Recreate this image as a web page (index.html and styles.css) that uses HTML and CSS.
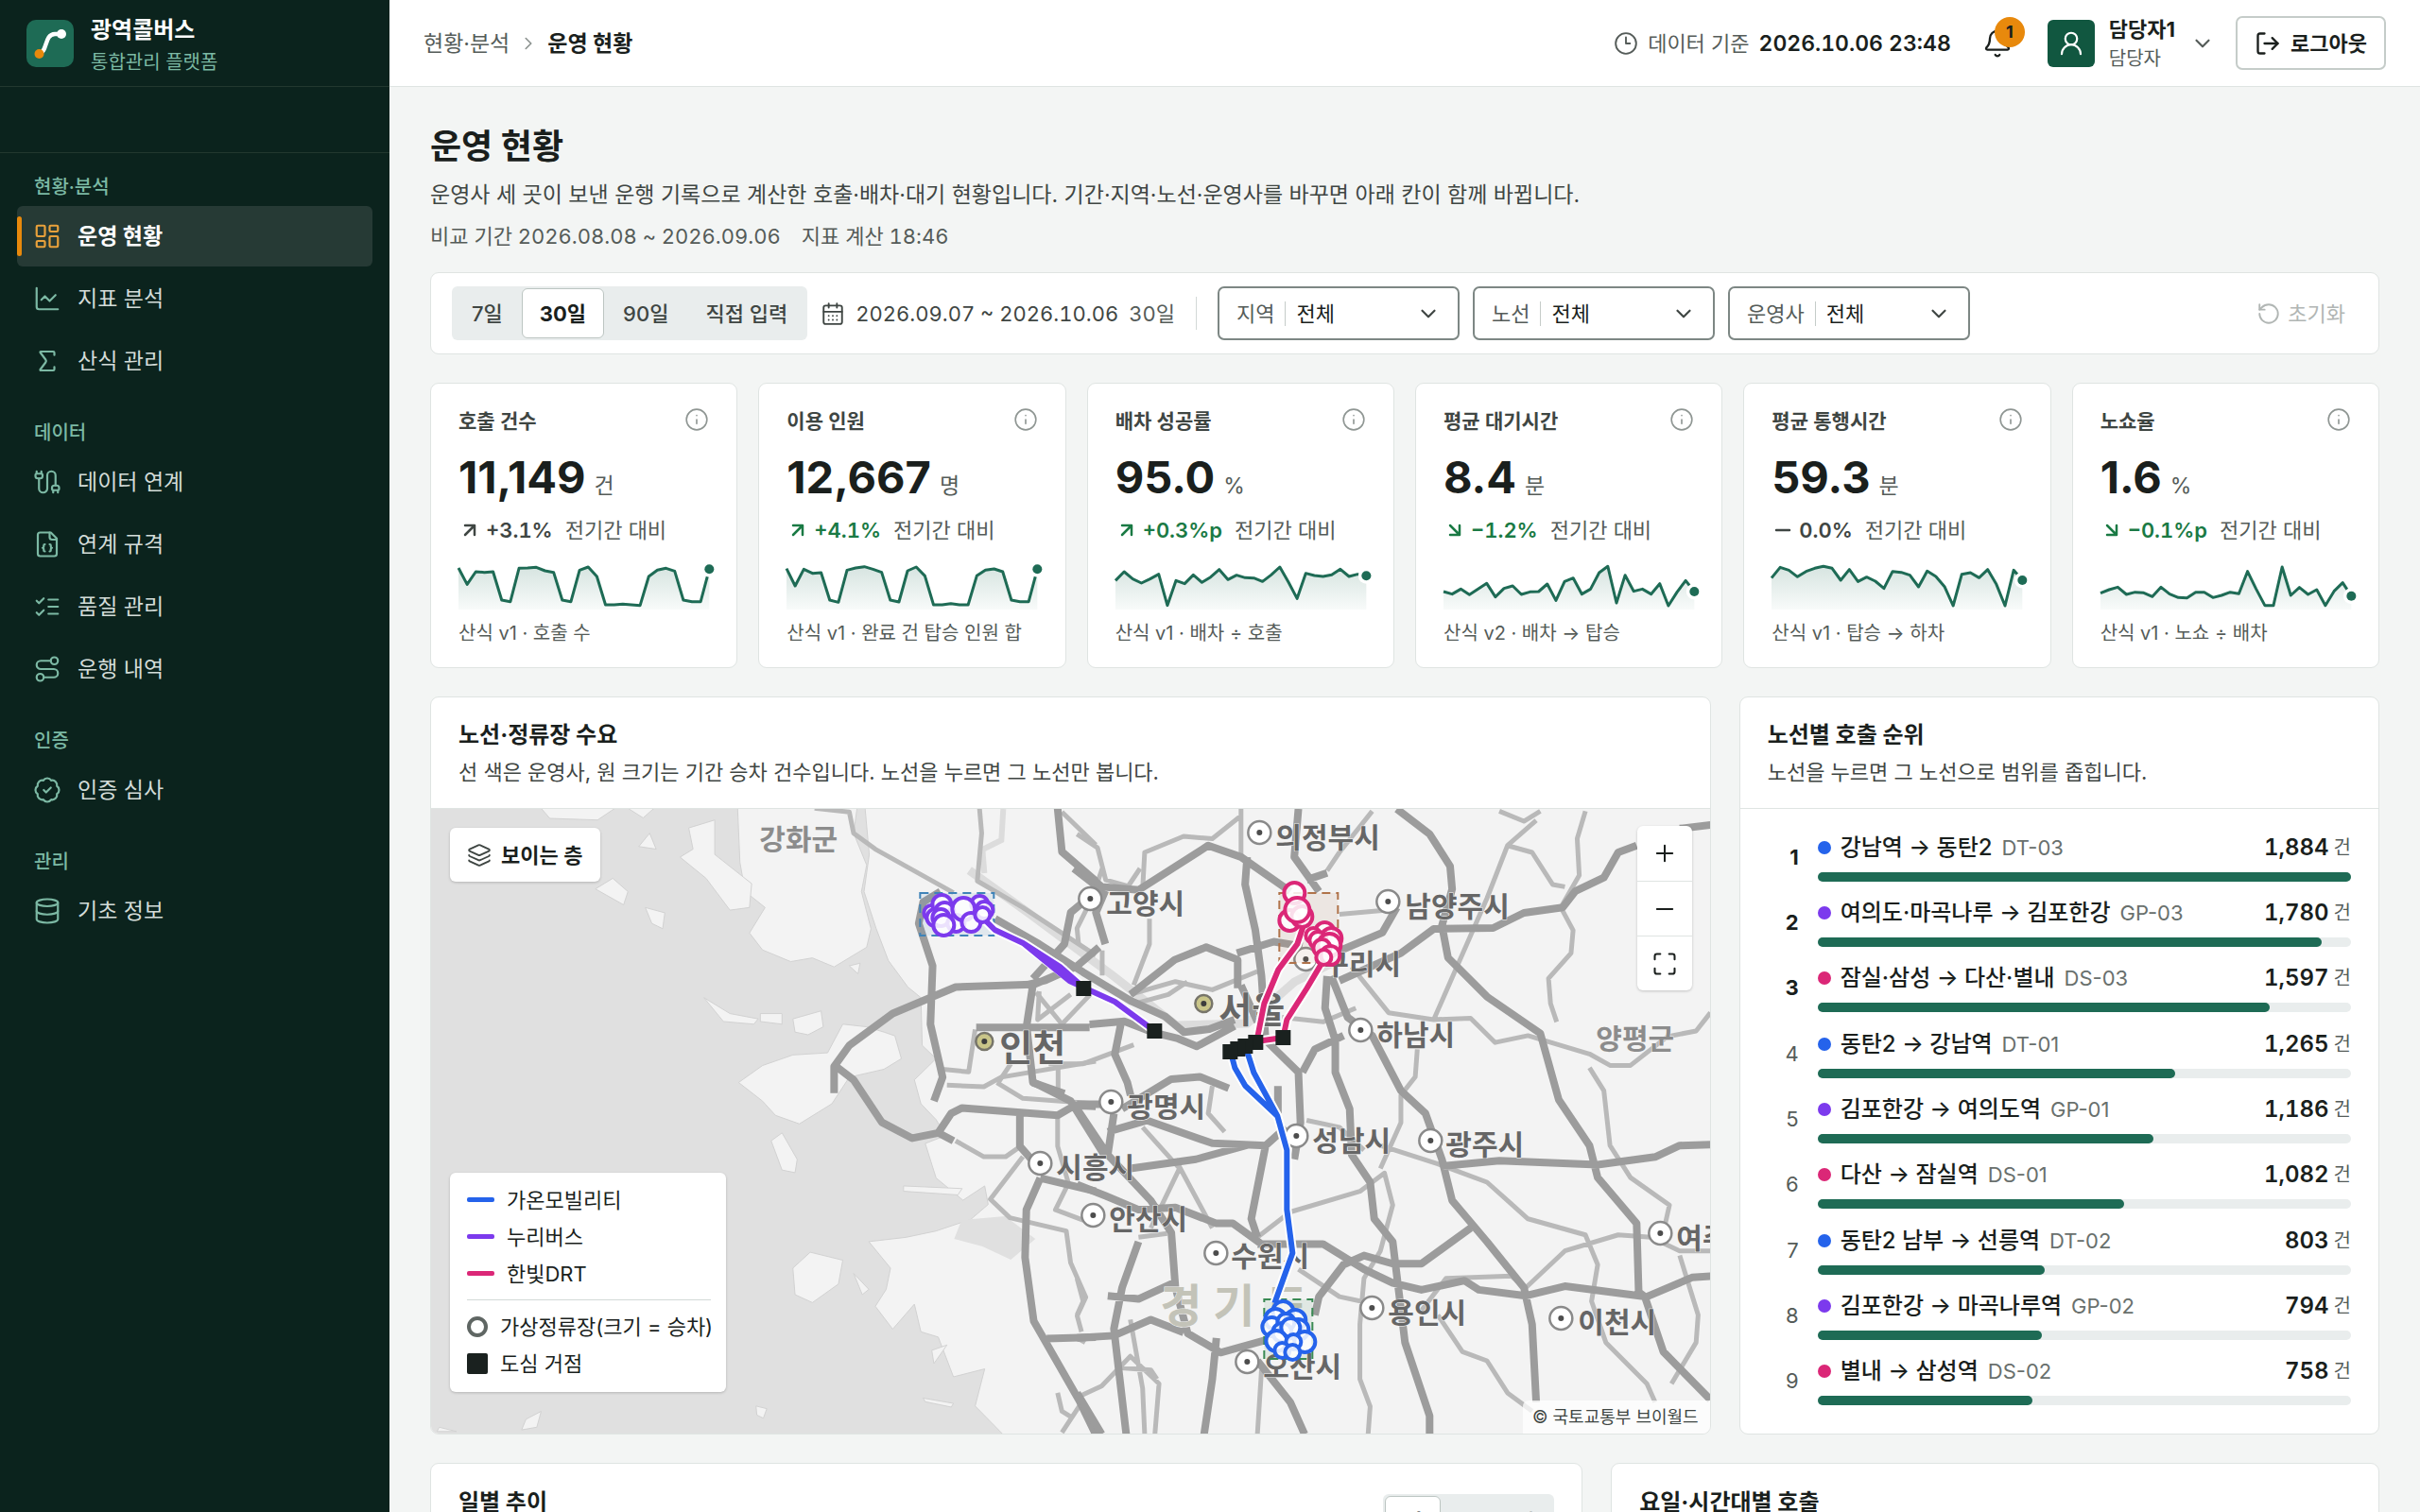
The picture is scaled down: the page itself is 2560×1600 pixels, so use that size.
FILE: index.html
```html
<!DOCTYPE html>
<html lang="ko">
<head>
<meta charset="utf-8">
<meta name="viewport" content="width=device-width, initial-scale=1">
<title>운영 현황 · 광역콜버스</title>
<link rel="stylesheet" href="styles.css">
</head>
<body>
<svg class="sprite" aria-hidden="true">
  <symbol id="i-dashboard" viewBox="0 0 24 24"><rect x="3" y="3" width="7" height="9" rx="1"/><rect x="14" y="3" width="7" height="5" rx="1"/><rect x="14" y="12" width="7" height="9" rx="1"/><rect x="3" y="16" width="7" height="5" rx="1"/></symbol>
  <symbol id="i-line" viewBox="0 0 24 24"><path d="M3 3v16a2 2 0 0 0 2 2h16"/><path d="m19 9-5 5-4-4-3 3"/></symbol>
  <symbol id="i-sigma" viewBox="0 0 24 24"><path d="M18 7V5a1 1 0 0 0-1-1H6.5a.5.5 0 0 0-.4.8l4.5 6a2 2 0 0 1 0 2.4l-4.5 6a.5.5 0 0 0 .4.8H17a1 1 0 0 0 1-1v-2"/></symbol>
  <symbol id="i-cable" viewBox="0 0 24 24"><path d="M17 21v-2a1 1 0 0 1-1-1v-1a2 2 0 0 1 2-2h2a2 2 0 0 1 2 2v1a1 1 0 0 1-1 1"/><path d="M19 15V6.5a1 1 0 0 0-7 0v11a1 1 0 0 1-7 0V9"/><path d="M21 21v-2h-4"/><path d="M3 5h4V3"/><path d="M7 5a1 1 0 0 1 1 1v1a2 2 0 0 1-2 2H4a2 2 0 0 1-2-2V6a1 1 0 0 1 1-1V3"/></symbol>
  <symbol id="i-json" viewBox="0 0 24 24"><path d="M15 2H6a2 2 0 0 0-2 2v16a2 2 0 0 0 2 2h12a2 2 0 0 0 2-2V7Z"/><path d="M14 2v4a2 2 0 0 0 2 2h4"/><path d="M10 12a1 1 0 0 0-1 1v1a1 1 0 0 1-1 1 1 1 0 0 1 1 1v1a1 1 0 0 0 1 1"/><path d="M14 18a1 1 0 0 0 1-1v-1a1 1 0 0 1 1-1 1 1 0 0 1-1-1v-1a1 1 0 0 0-1-1"/></symbol>
  <symbol id="i-checks" viewBox="0 0 24 24"><path d="m3 17 2 2 4-4"/><path d="m3 7 2 2 4-4"/><path d="M13 6h8M13 12h8M13 18h8"/></symbol>
  <symbol id="i-route" viewBox="0 0 24 24"><circle cx="6" cy="19" r="3"/><path d="M9 19h8.500a3.500 3.500 0 0 0 0-7h-11a3.500 3.500 0 0 1 0-7H15"/><circle cx="18" cy="5" r="3"/></symbol>
  <symbol id="i-badge" viewBox="0 0 24 24"><path d="M3.850 8.620a4 4 0 0 1 4.780-4.770 4 4 0 0 1 6.740 0 4 4 0 0 1 4.780 4.780 4 4 0 0 1 0 6.740 4 4 0 0 1-4.770 4.780 4 4 0 0 1-6.750 0 4 4 0 0 1-4.780-4.770 4 4 0 0 1 0-6.760Z"/><path d="m9 12 2 2 4-4"/></symbol>
  <symbol id="i-db" viewBox="0 0 24 24"><ellipse cx="12" cy="5" rx="9" ry="3"/><path d="M3 5V19A9 3 0 0 0 21 19V5"/><path d="M3 12A9 3 0 0 0 21 12"/></symbol>
  <symbol id="i-chev-r" viewBox="0 0 24 24"><path d="m9 18 6-6-6-6"/></symbol>
  <symbol id="i-chev-d" viewBox="0 0 24 24"><path d="m6 9 6 6 6-6"/></symbol>
  <symbol id="i-clock" viewBox="0 0 24 24"><circle cx="12" cy="12" r="10"/><path d="M12 6v6h4"/></symbol>
  <symbol id="i-bell" viewBox="0 0 24 24"><path d="M10.268 21a2 2 0 0 0 3.464 0"/><path d="M3.262 15.326A1 1 0 0 0 4 17h16a1 1 0 0 0 .74-1.673C19.410 13.956 18 12.499 18 8A6 6 0 0 0 6 8c0 4.499-1.411 5.956-2.738 7.326"/></symbol>
  <symbol id="i-user" viewBox="0 0 24 24"><circle cx="12" cy="8" r="5"/><path d="M20 21a8 8 0 0 0-16 0"/></symbol>
  <symbol id="i-logout" viewBox="0 0 24 24"><path d="m16 17 5-5-5-5"/><path d="M21 12H9"/><path d="M9 21H5a2 2 0 0 1-2-2V5a2 2 0 0 1 2-2h4"/></symbol>
  <symbol id="i-cal" viewBox="0 0 24 24"><path d="M8 2v4M16 2v4"/><rect x="3" y="4" width="18" height="18" rx="2"/><path d="M3 10h18M8 14h.01M12 14h.01M16 14h.01M8 18h.01M12 18h.01M16 18h.01"/></symbol>
  <symbol id="i-reset" viewBox="0 0 24 24"><path d="M3 12a9 9 0 1 0 9-9 9.750 9.750 0 0 0-6.740 2.740L3 8"/><path d="M3 3v5h5"/></symbol>
  <symbol id="i-info" viewBox="0 0 24 24"><circle cx="12" cy="12" r="10"/><path d="M12 16v-4M12 8h.01"/></symbol>
  <symbol id="i-up" viewBox="0 0 24 24"><path d="M7 7h10v10M7 17 17 7"/></symbol>
  <symbol id="i-down" viewBox="0 0 24 24"><path d="m7 7 10 10M17 7v10H7"/></symbol>
  <symbol id="i-minus" viewBox="0 0 24 24"><path d="M5 12h14"/></symbol>
  <symbol id="i-plus" viewBox="0 0 24 24"><path d="M5 12h14M12 5v14"/></symbol>
  <symbol id="i-max" viewBox="0 0 24 24"><path d="M8 3H5a2 2 0 0 0-2 2v3M21 8V5a2 2 0 0 0-2-2h-3M3 16v3a2 2 0 0 0 2 2h3M16 21h3a2 2 0 0 0 2-2v-3"/></symbol>
  <symbol id="i-layers" viewBox="0 0 24 24"><path d="M12.830 2.180a2 2 0 0 0-1.660 0L2.600 6.080a1 1 0 0 0 0 1.830l8.580 3.910a2 2 0 0 0 1.660 0l8.580-3.900a1 1 0 0 0 0-1.830z"/><path d="M2 12a1 1 0 0 0 .58.91l8.600 3.910a2 2 0 0 0 1.650 0l8.580-3.900A1 1 0 0 0 22 12"/><path d="M2 17a1 1 0 0 0 .58.91l8.600 3.910a2 2 0 0 0 1.650 0l8.580-3.900A1 1 0 0 0 22 17"/></symbol>
  <symbol id="m-city" viewBox="0 0 28 28"><circle cx="14" cy="14" r="12" fill="#fff" stroke="#8a8a8a" stroke-width="2.500"/><circle cx="14" cy="14" r="3" fill="#4d4d4d"/></symbol>
  <symbol id="m-metro" viewBox="0 0 28 28"><circle cx="14" cy="14" r="9" fill="#c9c589" stroke="#77756a" stroke-width="2.500"/><circle cx="14" cy="14" r="3" fill="#3d3d3d"/></symbol>
</svg>

<div class="app">
  <aside class="sidebar">
    <div class="brand">
      <svg class="logo" viewBox="0 0 50 50" aria-hidden="true"><rect width="50" height="50" rx="10" fill="#1e6b55"/><path d="M14 35.500C22 34 19 15 30 15h7" fill="none" stroke="#fff" stroke-width="4.500"/><circle cx="37" cy="15" r="5" fill="#fff"/><circle cx="13.500" cy="36" r="5" fill="#e8890c"/></svg>
      <div class="brand-text"><strong>광역콜버스</strong><span>통합관리 플랫폼</span></div>
    </div>
    <div class="brand-sub"></div>
    <nav class="nav">
      <section>
        <h2>현황·분석</h2>
        <a class="active" href="#" aria-current="page"><svg class="icon"><use href="#i-dashboard"/></svg>운영 현황</a>
        <a href="#"><svg class="icon"><use href="#i-line"/></svg>지표 분석</a>
        <a href="#"><svg class="icon"><use href="#i-sigma"/></svg>산식 관리</a>
      </section>
      <section>
        <h2>데이터</h2>
        <a href="#"><svg class="icon"><use href="#i-cable"/></svg>데이터 연계</a>
        <a href="#"><svg class="icon"><use href="#i-json"/></svg>연계 규격</a>
        <a href="#"><svg class="icon"><use href="#i-checks"/></svg>품질 관리</a>
        <a href="#"><svg class="icon"><use href="#i-route"/></svg>운행 내역</a>
      </section>
      <section>
        <h2>인증</h2>
        <a href="#"><svg class="icon"><use href="#i-badge"/></svg>인증 심사</a>
      </section>
      <section>
        <h2>관리</h2>
        <a href="#"><svg class="icon"><use href="#i-db"/></svg>기초 정보</a>
      </section>
    </nav>
  </aside>

  <div class="page">
    <header class="topbar">
      <nav class="crumbs" aria-label="위치"><a href="#">현황·분석</a><svg class="icon"><use href="#i-chev-r"/></svg><strong>운영 현황</strong></nav>
      <div class="asof"><svg class="icon"><use href="#i-clock"/></svg><span>데이터 기준</span><time>2026.10.06 23:48</time></div>
      <button class="bell" type="button" aria-label="알림"><svg class="icon"><use href="#i-bell"/></svg><span class="badge">1</span></button>
      <button class="user" type="button">
        <span class="avatar"><svg class="icon"><use href="#i-user"/></svg></span>
        <span class="who"><strong>담당자1</strong><span>담당자</span></span>
        <svg class="icon chev"><use href="#i-chev-d"/></svg>
      </button>
      <button class="logout" type="button"><svg class="icon"><use href="#i-logout"/></svg>로그아웃</button>
    </header>

    <main class="content">
      <h1>운영 현황</h1>
      <p class="lead">운영사 세 곳이 보낸 운행 기록으로 계산한 호출·배차·대기 현황입니다. 기간·지역·노선·운영사를 바꾸면 아래 칸이 함께 바뀝니다.</p>
      <p class="meta"><span>비교 기간 2026.08.08 ~ 2026.09.06</span><span>지표 계산 18:46</span></p>

      <form class="filters">
        <div class="segment">
          <button type="button">7일</button><button type="button" class="on">30일</button><button type="button">90일</button><button type="button">직접 입력</button>
        </div>
        <div class="range"><svg class="icon"><use href="#i-cal"/></svg><span>2026.09.07 ~ 2026.10.06</span><span class="days">30일</span></div>
        <span class="rule"></span>
        <label class="pick"><span>지역</span><select><option>전체</option></select><svg class="icon"><use href="#i-chev-d"/></svg></label>
        <label class="pick"><span>노선</span><select><option>전체</option></select><svg class="icon"><use href="#i-chev-d"/></svg></label>
        <label class="pick"><span>운영사</span><select><option>전체</option></select><svg class="icon"><use href="#i-chev-d"/></svg></label>
        <button class="reset" type="button" disabled><svg class="icon"><use href="#i-reset"/></svg>초기화</button>
      </form>

      <section class="kpis">
        <article class="card kpi">
          <header><h3>호출 건수</h3><svg class="icon"><use href="#i-info"/></svg></header>
          <p class="value">11,149<small>건</small></p>
          <p class="delta"><b><svg class="icon"><use href="#i-up"/></svg>+3.1%</b>전기간 대비</p>
          <svg class="spark" viewBox="0 0 290 150" preserveAspectRatio="none" data-points="18 70 30 32 30 120 125 19 18 16 27 32 120 125 25 15 45 135 135 133 135 137 45 25 19 28 120 125 125 22"></svg>
          <p class="foot">산식 v1 · 호출 수</p>
        </article>
        <article class="card kpi">
          <header><h3>이용 인원</h3><svg class="icon"><use href="#i-info"/></svg></header>
          <p class="value">12,667<small>명</small></p>
          <p class="delta"><b class="good"><svg class="icon"><use href="#i-up"/></svg>+4.1%</b>전기간 대비</p>
          <svg class="spark" viewBox="0 0 290 150" preserveAspectRatio="none" data-points="20 75 22 35 33 120 127 25 18 14 22 32 120 126 27 15 43 135 135 131 135 135 43 25 21 30 120 125 125 22"></svg>
          <p class="foot">산식 v1 · 완료 건 탑승 인원 합</p>
        </article>
        <article class="card kpi">
          <header><h3>배차 성공률</h3><svg class="icon"><use href="#i-info"/></svg></header>
          <p class="value">95.0<small>%</small></p>
          <p class="delta"><b class="good"><svg class="icon"><use href="#i-up"/></svg>+0.3%p</b>전기간 대비</p>
          <svg class="spark" viewBox="0 0 290 150" preserveAspectRatio="none" data-points="58 30 53 66 53 38 137 58 68 40 64 47 23 55 41 49 50 61 40 15 63 115 35 42 45 40 22 45 38 43"></svg>
          <p class="foot">산식 v1 · 배차 ÷ 호출</p>
        </article>
        <article class="card kpi">
          <header><h3>평균 대기시간</h3><svg class="icon"><use href="#i-info"/></svg></header>
          <p class="value">8.4<small>분</small></p>
          <p class="delta"><b class="good"><svg class="icon"><use href="#i-down"/></svg>−1.2%</b>전기간 대비</p>
          <svg class="spark" viewBox="0 0 290 150" preserveAspectRatio="none" data-points="93 101 85 103 85 67 110 83 75 102 94 93 69 121 61 50 101 85 33 13 129 41 92 85 101 68 138 95 58 93"></svg>
          <p class="foot">산식 v2 · 배차 → 탑승</p>
        </article>
        <article class="card kpi">
          <header><h3>평균 통행시간</h3><svg class="icon"><use href="#i-info"/></svg></header>
          <p class="value">59.3<small>분</small></p>
          <p class="delta"><b><svg class="icon"><use href="#i-minus"/></svg>0.0%</b>전기간 대비</p>
          <svg class="spark" viewBox="0 0 290 150" preserveAspectRatio="none" data-points="50 16 25 46 29 19 13 19 57 23 61 47 60 83 29 32 41 78 28 45 77 138 38 33 49 23 70 138 25 57"></svg>
          <p class="foot">산식 v1 · 탑승 → 하차</p>
        </article>
        <article class="card kpi">
          <header><h3>노쇼율</h3><svg class="icon"><use href="#i-info"/></svg></header>
          <p class="value">1.6<small>%</small></p>
          <p class="delta"><b class="good"><svg class="icon"><use href="#i-down"/></svg>−0.1%p</b>전기간 대비</p>
          <svg class="spark" viewBox="0 0 290 150" preserveAspectRatio="none" data-points="98 87 79 102 95 97 109 79 101 112 113 95 95 112 105 95 100 29 85 137 137 15 105 80 102 87 137 92 65 107"></svg>
          <p class="foot">산식 v1 · 노쇼 ÷ 배차</p>
        </article>
      </section>

      <div class="row-map">
        <section class="card panel">
          <header class="panel-head"><h2>노선·정류장 수요</h2><p>선 색은 운영사, 원 크기는 기간 승차 건수입니다. 노선을 누르면 그 노선만 봅니다.</p></header>
          <div class="map">
            <svg class="map-art" viewBox="456 857 1354 661" preserveAspectRatio="xMidYMid slice" role="img" aria-label="수도권 노선 지도">
              <!-- land and islands -->
              <g class="land" transform="translate(440 720) scale(.4591 .5612)">
                <path d="M1035 230 1046 330 1034 400 1062 470 1090 530 1135 580 1165 600 1168 690 1200 715 1150 755 1165 800 1200 830 1222 860 1175 875 1200 940 1262 982 1312 955 1320 990 1280 1018 1200 1040 1130 1052 1045 1060 1095 1110 1085 1150 1060 1182 1100 1225 1150 1178 1165 1230 1205 1240 1240 1315 1312 1300 1290 1370 1362 1430 3100 1440 3100 230Z"/>
                <path d="M742 230 748 345 760 400 806 430 770 478 800 510 865 532 915 525 965 542 1040 505 1050 470 1028 400 1040 350 1010 290 1020 230Z"/>
                <path d="M745 760 800 728 870 708 950 704 985 650 1040 655 1080 665 1105 672 1120 715 1080 735 1000 750 960 800 885 838 830 822 800 795Z"/>
                <path d="M630 280 690 265 690 330 775 385 770 430 725 435 670 375 610 335 640 320Z"/>
                <path d="M415 395 455 375 490 400 480 425ZM530 430 575 440 570 470 545 460ZM515 315 540 290 555 320ZM290 243 460 243 420 265 310 262ZM490 243h60l-25 18Z"/>
                <path d="M665 600 725 630 790 640 780 650 710 645ZM795 630h50v20l-50-5ZM870 640 935 625 940 655 905 670 875 665Z"/>
                <path d="M820 870 845 855 880 905 875 930 845 925ZM870 1110 910 1080 985 1095 975 1140 915 1175 875 1160ZM1010 1120l35 30-15 10Z"/>
                <path d="M1125 955 1260 960 1250 972 1125 965ZM1170 1355 1240 1365 1235 1372 1175 1362ZM785 1370l25 5-8 18-15-6ZM255 1395l35-15-10 30-35 5ZM55 1410l40 8H50ZM1190 1265l35-10-30 35ZM1000 540l25-5-5 20Z"/>
              </g>
              <!-- inlet south of the reclaimed coast -->
              <path class="inlet" d="M1018 1292 1064 1288 1096 1312 1070 1334 1040 1320 1010 1312Z"/>
              <!-- river bands -->
              <g class="river">
                <path d="M1026 922 1090 968 1180 1035 1245 1086 1320 1084 1370 1040 1420 1015"/>
                <path class="thin" d="M1062 857 1060 890 1040 900 1042 925"/>
              </g>
              <!-- minor roads -->
              <g class="minor" transform="translate(440 720) scale(.4591 .5612)">
                <path d="M920 243 1000 250 1010 290 1060 320 1240 402M1300 243 1305 290 1295 380 1400 430 1568 520M1490 250 1568 312M1290 660 1275 740 1215 735M1225 765 1310 768 1350 750 1568 720M1340 760 1400 790 1568 800M1245 870 1310 900 1360 900 1395 880M1400 900 1325 980 1370 1015 1500 1040 1510 1100 1545 1165 1525 1200 1535 1230M1480 820 1480 880 1505 950 1475 1000 1540 1020M1490 1420 1530 1370M1480 1345l10 35 20 10M1430 590l60 60 70-60"/>
              </g>
              <g class="minor" transform="translate(960 920) scale(.3333)">
                <path d="M620 0 600 60M740 0 700 60M770 160 770 240 720 370M620 260 620 340M580 110 540 190 545 240M420 390 415 480 520 400M480 720 480 620M290 680 330 620M720 430 830 400 890 360M450 620 560 620 720 560"/>
              </g>
              <g class="minor" transform="translate(1140 840) scale(.4337 .4847)">
                <path d="M400 35V140M0 90 50 120 70 190 130 205M160 210 165 130 260 95 330 100 400 50M720 40 640 130 610 170M640 265 770 255M1240 40 1220 100 1225 180 1180 250 1210 300 1205 350 1150 405 1155 460 1170 500M1030 40 1090 62 1130 40M1120 60 1050 115 1000 230 870 495M1050 115 1110 130 1160 200 1190 205M130 440 240 412 330 430 440 390M500 490 600 500 680 470M670 380 760 480 870 495 960 492 1020 545 1100 530 1250 570 1300 595 1350 595 1440 532 1510 520 1545 480M830 560 825 620 790 660 790 720 740 820M1250 600 1285 650 1300 770 1350 840 1445 900 1430 960M740 770 880 810 1000 850 1100 930 1240 965 1270 1030 1255 1110 1290 1200 1390 1290 1410 1330M1095 1080 1190 1000 1320 965 1400 970 1470 1000 1545 1000M440 970 520 915 690 870 750 830 770 900 740 1000 700 1060 690 1160 690 1280 715 1340 710 1400M540 1040 640 1100 720 1115M840 1130 900 1060 1060 1055 1090 1080M880 1140 940 1220 1000 1240 1050 1310 1110 1350M1470 1010 1515 1140 1510 1200 1450 1290M240 800 330 950M160 730 250 820 180 950M330 640 320 700 360 740M0 1060 15 1110 0 1140M0 1320 60 1295 130 1230 200 1290 190 1400M150 970 220 962M450 1260 440 1400M130 1150 160 1300 165 1400M100 1255 180 1260 195 1280M0 1190 20 1200M560 715 640 730 700 780"/>
              </g>
              <!-- motorways -->
              <g class="major" transform="translate(440 720) scale(.4591 .5612)">
                <path d="M965 780V730L1000 690 1100 630 1245 580 1420 575M970 730 1010 755 1075 835 1145 865 1205 855 1235 818 1260 808 1480 822 1520 803 1568 805M1240 870 1205 855M1210 400 1170 420 1160 460 1192 540 1187 650 1215 750 1195 795M1480 243 1490 325 1568 380M1425 760 1510 795 1590 900M1440 940 1408 1000 1405 1090 1425 1210 1530 1360 1568 1424M1440 940 1568 965M1455 1243 1568 1240M1393 810 1393 880 1425 910"/>
              </g>
              <g class="major" transform="translate(960 920) scale(.3333)">
                <path d="M380 370 440 355 540 310 610 250M540 310 400 370 380 500 400 680 500 715M630 70 600 140 630 240M580 90 520 140 500 240 400 350M280 160 420 240 560 330 710 420 820 470 880 520 960 510 1040 480M220 505H580M580 495 690 485 780 520 860 540 920 565 1040 500M680 490 660 590 700 680 710 720M530 0 620 70M710 400 850 290 950 250 1050 290V380"/>
              </g>
              <g class="major" transform="translate(1140 840) scale(.4337 .4847)">
                <path d="M0 160 60 205 150 212 320 115 400 140 520 215M540 35 530 140 590 215M560 190 610 175M780 35 860 90 910 160 915 210 890 290 905 360 1000 445 1130 525 1175 670 1250 770 1270 840 1365 940 1370 1090 1385 1100 1430 1220 1545 1325M1470 78 1545 70M1365 115 1320 130 1285 185 1215 215 1185 250 1090 262 1015 295 870 297 790 350 640 410M780 250 745 305 640 345M415 140 410 200 435 300 450 400 460 540 540 610 545 720 530 800M390 350 480 325 550 335M400 420 440 500M610 400 605 470 630 540 630 610 665 690 670 790 715 850 725 930 770 980 785 1090 800 1200 860 1360 860 1400M620 400 660 490 720 530 790 650 850 700 890 800 915 890 1000 980 1090 1080 1110 1160 1120 1330M890 815 1030 803 1270 812 1410 795 1470 770 1545 768M440 985 600 985 700 1040 770 1070 840 1085 945 1065 980 1085 1095 1098 1190 1077 1390 1100 1500 1058 1545 1055M960 950 840 1028 770 1028 700 1010 650 1030 590 1100 580 1140M75 740 170 715 330 765 460 770 510 730M130 820 290 800 420 768M460 770 425 930 440 970M0 855 70 880 150 910 240 905 340 940 380 940 450 985M0 690 75 790 180 890 230 960 240 1080 270 1180 350 1222 460 1195M90 700 75 790M0 1190 90 1185 180 1150 260 1178M150 980 110 1080 90 1170 120 1400M75 1098 150 1105 240 1068M340 1190 330 1280 310 1400M0 1310 60 1400M440 1240 520 1330 555 1400M490 640V700M110 690 230 625 300 620 370 645M550 610 580 560 650 530M0 680H60"/>
              </g>
              <!-- place names -->
              <g class="place">
                <text class="faint" x="804" y="900">강화군</text>
                <text class="faint" x="1689" y="1111">양평군</text>
                <text class="province" x="1228 1284 1340" y="1400">경기도</text>
                <use href="#m-city" x="1319" y="868" width="28" height="28"/><text x="1350" y="898">의정부시</text>
                <use href="#m-city" x="1140" y="938" width="28" height="28"/><text x="1171" y="968">고양시</text>
                <use href="#m-city" x="1455" y="941" width="28" height="28"/><text x="1487" y="971">남양주시</text>
                <use href="#m-city" x="1368" y="1002" width="28" height="28"/><text x="1400" y="1032">구리시</text>
                <use href="#m-city" x="1426" y="1077" width="28" height="28"/><text x="1457" y="1107">하남시</text>
                <use href="#m-city" x="1162" y="1153" width="28" height="28"/><text x="1193" y="1183">광명시</text>
                <use href="#m-city" x="1358" y="1189" width="28" height="28"/><text x="1389" y="1219">성남시</text>
                <use href="#m-city" x="1500" y="1194" width="28" height="28"/><text x="1530" y="1223">광주시</text>
                <use href="#m-city" x="1087" y="1218" width="28" height="28"/><text x="1118" y="1247">시흥시</text>
                <use href="#m-city" x="1143" y="1273" width="28" height="28"/><text x="1174" y="1302">안산시</text>
                <use href="#m-city" x="1273" y="1313" width="28" height="28"/><text x="1303" y="1341">수원시</text>
                <use href="#m-city" x="1743" y="1292" width="28" height="28"/><text x="1774" y="1322">여주시</text>
                <use href="#m-city" x="1438" y="1371" width="28" height="28"/><text x="1469" y="1401">용인시</text>
                <use href="#m-city" x="1638" y="1382" width="28" height="28"/><text x="1670" y="1411">이천시</text>
                <use href="#m-city" x="1306" y="1428" width="28" height="28"/><text x="1337" y="1458">오산시</text>
                <use href="#m-metro" x="1260" y="1049" width="28" height="28"/><text class="metro" x="1290" y="1083">서울</text>
                <use href="#m-metro" x="1028" y="1089" width="28" height="28"/><text class="metro" x="1058" y="1123">인천</text>
              </g>
              <!-- service areas -->
              <g class="area">
                <rect x="974" y="946" width="78" height="45" stroke="#3f83b8" fill="#3f83b8"/>
                <rect x="1354" y="946" width="62" height="74" stroke="#b0734a" fill="#b0734a"/>
                <rect x="1338" y="1376" width="51" height="63" stroke="#3a8a54" fill="#3a8a54"/>
              </g>
              <!-- routes -->
              <g class="casing">
                <path d="M1044 976 1053 985 1083 999 1122 1024 1147 1046 1180 1061 1222 1092M1083 999 1132 1036 1147 1046"/>
                <path d="M1379 982 1373 1000 1353 1027 1338 1063 1330 1103M1402 1015 1383 1047 1362 1080 1358 1099 1330 1103"/>
                <path d="M1303 1116 1307 1131 1318 1150 1352 1182M1320 1114 1327 1136 1352 1182 1362 1218V1281L1368 1327 1349 1380"/>
              </g>
              <g class="route">
                <path stroke="#7c3aed" d="M1044 976 1053 985 1083 999 1122 1024 1147 1046 1180 1061 1222 1092M1083 999 1132 1039 1147 1046"/>
                <path stroke="#db2777" d="M1379 982 1373 1000 1353 1027 1338 1063 1330 1103M1402 1015 1383 1047 1362 1080 1358 1099 1330 1103"/>
                <path stroke="#2563eb" d="M1303 1116 1307 1131 1318 1150 1352 1182M1320 1114 1327 1136 1352 1182 1362 1218V1281L1368 1327 1349 1380"/>
              </g>
              <!-- virtual stops -->
              <g class="stops" stroke="#7c3aed">
                <circle cx="986" cy="967" r="8"/><circle cx="997" cy="958" r="10"/><circle cx="990" cy="972" r="9"/><circle cx="1000" cy="966" r="10"/><circle cx="996" cy="972" r="9"/><circle cx="1037" cy="958" r="9"/><circle cx="1042" cy="964" r="9"/><circle cx="1012" cy="978" r="9"/><circle cx="1020" cy="963" r="12"/><circle cx="999" cy="980" r="11"/><circle cx="1028" cy="977" r="10"/><circle cx="1040" cy="969" r="8"/>
              </g>
              <g class="stops" stroke="#db2777">
                <circle cx="1370" cy="946" r="11"/><circle cx="1365" cy="975" r="11"/><circle cx="1378" cy="971" r="11"/><circle cx="1373" cy="964" r="13"/><circle cx="1402" cy="987" r="10"/><circle cx="1390" cy="991" r="8"/><circle cx="1409" cy="994" r="11"/><circle cx="1395" cy="996" r="9"/><circle cx="1407" cy="1001" r="12"/><circle cx="1399" cy="1004" r="9"/><circle cx="1408" cy="1012" r="10"/><circle cx="1401" cy="1014" r="8"/>
              </g>
              <g class="stops" stroke="#2563eb">
                <circle cx="1358" cy="1389" r="11"/><circle cx="1350" cy="1397" r="11"/><circle cx="1371" cy="1398" r="11"/><circle cx="1346" cy="1405" r="10"/><circle cx="1374" cy="1408" r="11"/><circle cx="1361" cy="1400" r="9"/><circle cx="1357" cy="1411" r="10"/><circle cx="1366" cy="1406" r="10"/><circle cx="1381" cy="1421" r="11"/><circle cx="1351" cy="1420" r="11"/><circle cx="1369" cy="1421" r="8"/><circle cx="1357" cy="1430" r="8"/><circle cx="1368" cy="1432" r="8"/>
              </g>
              <g fill="#1a211f">
                <rect x="1139" y="1039" width="16" height="16"/><rect x="1214" y="1084" width="16" height="16"/><rect x="1350" y="1091" width="16" height="16"/><rect x="1321" y="1096" width="16" height="16"/><rect x="1310" y="1100" width="16" height="16"/><rect x="1302" y="1103" width="16" height="16"/><rect x="1294" y="1106" width="16" height="16"/>
              </g>
            </svg>
            <button class="layer-btn" type="button"><svg class="icon"><use href="#i-layers"/></svg>보이는 층</button>
            <div class="zoomer">
              <button type="button" aria-label="확대"><svg class="icon"><use href="#i-plus"/></svg></button>
              <button type="button" aria-label="축소"><svg class="icon"><use href="#i-minus"/></svg></button>
              <button type="button" aria-label="전체 보기"><svg class="icon"><use href="#i-max"/></svg></button>
            </div>
            <ul class="legend">
              <li><i class="line blue"></i>가온모빌리티</li>
              <li><i class="line violet"></i>누리버스</li>
              <li><i class="line pink"></i>한빛DRT</li>
              <li class="first-mark"><i class="ring"></i>가상정류장(크기 = 승차)</li>
              <li><i class="square"></i>도심 거점</li>
            </ul>
            <p class="credit">© 국토교통부 브이월드</p>
          </div>
        </section>

        <section class="card panel">
          <header class="panel-head"><h2>노선별 호출 순위</h2><p>노선을 누르면 그 노선으로 범위를 좁힙니다.</p></header>
          <ol class="rank">
            <li class="top"><span class="no">1</span><div><p><i class="blue"></i><b>강남역 → 동탄2</b><em>DT-03</em><strong>1,884</strong><small>건</small></p><div class="bar"><span style="width:100%"></span></div></div></li>
            <li class="top"><span class="no">2</span><div><p><i class="violet"></i><b>여의도·마곡나루 → 김포한강</b><em>GP-03</em><strong>1,780</strong><small>건</small></p><div class="bar"><span style="width:94.5%"></span></div></div></li>
            <li class="top"><span class="no">3</span><div><p><i class="pink"></i><b>잠실·삼성 → 다산·별내</b><em>DS-03</em><strong>1,597</strong><small>건</small></p><div class="bar"><span style="width:84.8%"></span></div></div></li>
            <li><span class="no">4</span><div><p><i class="blue"></i><b>동탄2 → 강남역</b><em>DT-01</em><strong>1,265</strong><small>건</small></p><div class="bar"><span style="width:67.1%"></span></div></div></li>
            <li><span class="no">5</span><div><p><i class="violet"></i><b>김포한강 → 여의도역</b><em>GP-01</em><strong>1,186</strong><small>건</small></p><div class="bar"><span style="width:63%"></span></div></div></li>
            <li><span class="no">6</span><div><p><i class="pink"></i><b>다산 → 잠실역</b><em>DS-01</em><strong>1,082</strong><small>건</small></p><div class="bar"><span style="width:57.4%"></span></div></div></li>
            <li><span class="no">7</span><div><p><i class="blue"></i><b>동탄2 남부 → 선릉역</b><em>DT-02</em><strong>803</strong><small>건</small></p><div class="bar"><span style="width:42.6%"></span></div></div></li>
            <li><span class="no">8</span><div><p><i class="violet"></i><b>김포한강 → 마곡나루역</b><em>GP-02</em><strong>794</strong><small>건</small></p><div class="bar"><span style="width:42.1%"></span></div></div></li>
            <li><span class="no">9</span><div><p><i class="pink"></i><b>별내 → 삼성역</b><em>DS-02</em><strong>758</strong><small>건</small></p><div class="bar"><span style="width:40.2%"></span></div></div></li>
          </ol>
        </section>
      </div>

      <div class="row-trend">
        <section class="card panel trend"><h2>일별 추이</h2><div class="segment"><button type="button" class="on">일</button><button type="button">주</button><button type="button">월</button></div></section>
        <section class="card panel trend"><h2>요일·시간대별 호출</h2></section>
      </div>
    </main>
  </div>
</div>
<script src="sparks.js"></script>
</body>
</html>
```
FILE: styles.css
```css
:root {
  --ink: #1a1f1d;
  --text: #3f4643;
  --sub: #555c59;
  --muted: #69706d;
  --line: #dfe4e2;
  --green: #1e6b55;
  --good: #1a7a44;
}
* { box-sizing: border-box; }
body {
  margin: 0;
  background: #f3f5f4;
  color: var(--ink);
  font-family: Inter, "Noto Sans CJK KR", sans-serif;
  font-size: 22px;
  line-height: 32px;
}
h1, h2, h3, p, ol, ul { margin: 0; padding: 0; }
ol, ul { list-style: none; }
a { color: inherit; text-decoration: none; }
button, select { font: inherit; color: inherit; }
button { padding: 0; border: 0; background: none; cursor: pointer; }
.sprite { position: absolute; width: 0; height: 0; }
.icon {
  flex: none;
  width: 26px;
  height: 26px;
  fill: none;
  stroke: currentColor;
  stroke-width: 1.75;
  stroke-linecap: round;
  stroke-linejoin: round;
}
.blue { background: #2563eb; }
.violet { background: #7c3aed; }
.pink { background: #db2777; }

.app { display: grid; grid-template-columns: 412px 1fr; height: 100vh; overflow: hidden; }

/* sidebar */
.sidebar { background: #0b231d; color: #d3dcd8; }
.brand {
  display: flex;
  align-items: center;
  gap: 18px;
  height: 92px;
  padding-left: 28px;
  border-bottom: 1px solid #22382f;
}
.logo { width: 50px; height: 50px; }
.brand-text { display: grid; gap: 5px; padding-top: 6px; }
.brand strong { font-size: 24px; line-height: 30px; color: #fff; }
.brand span { font-size: 20px; line-height: 28px; color: #7cb9a4; }
.brand-sub { height: 70px; border-bottom: 1px solid #22382f; }
.nav { display: grid; gap: 28px; padding: 20px 18px; }
.nav section { display: grid; gap: 2px; }
.nav h2 { padding: 2px 18px 4px; font-size: 20px; line-height: 28px; font-weight: 500; color: #7cb9a4; }
.nav a {
  display: flex;
  align-items: center;
  gap: 17px;
  height: 64px;
  padding-left: 17px;
  border-radius: 6px;
  font-size: 23px;
}
.nav .icon { width: 30px; height: 30px; color: #7cb9a4; }
.nav .active {
  position: relative;
  background: #263a35;
  color: #fff;
  font-weight: 700;
}
.nav .active .icon { color: #e9a13b; }
.nav .active::before {
  content: "";
  position: absolute;
  left: 0;
  top: 11px;
  bottom: 11px;
  width: 5px;
  border-radius: 3px;
  background: #e8890c;
}

/* top bar */
.page { display: flex; flex-direction: column; min-width: 0; min-height: 0; }
.topbar {
  display: flex;
  flex: none;
  align-items: center;
  height: 92px;
  padding: 0 36px;
  background: #fff;
  border-bottom: 1px solid var(--line);
}
.crumbs { display: flex; align-items: center; gap: 9px; margin-right: auto; font-size: 23px; color: var(--sub); }
.crumbs .icon { width: 22px; height: 22px; color: #8a918e; }
.crumbs strong { color: var(--ink); }
.asof { display: flex; align-items: center; gap: 10px; color: var(--sub); }
.asof time { font-size: 23px; font-weight: 600; color: var(--ink); font-variant-numeric: tabular-nums; }
.bell { position: relative; display: grid; place-items: center; width: 56px; height: 56px; margin: 0 25px 0 21px; }
.bell .icon { width: 32px; height: 32px; }
.badge {
  position: absolute;
  left: 25px;
  top: 0;
  width: 32px;
  height: 32px;
  border-radius: 50%;
  background: #e8890c;
  font-size: 18px;
  font-weight: 700;
}
.user { display: flex; align-items: center; text-align: left; }
.avatar { display: grid; place-items: center; width: 50px; height: 50px; border-radius: 6px; background: #115740; color: #fff; }
.avatar .icon { width: 30px; height: 30px; }
.who { display: grid; margin: 0 16px 0 15px; padding-top: 2px; font-size: 22px; line-height: 31px; }
.who span { font-size: 20px; color: var(--sub); }
.chev { color: var(--sub); stroke-width: 2; }
.logout {
  display: flex;
  align-items: center;
  gap: 10px;
  height: 57px;
  margin-left: 22px;
  padding: 0 18px;
  border: 2px solid #c5ccc9;
  border-radius: 7px;
  background: #fff;
  font-weight: 600;
}
.logout .icon { width: 28px; height: 28px; stroke-width: 2; }

/* page body */
.content { flex: 1; min-height: 0; overflow-y: auto; scrollbar-width: none; padding: 38px 43px; }
h1 { font-size: 36px; line-height: 50px; }
.lead { margin-top: 8px; font-size: 23px; line-height: 36px; color: var(--text); }
.meta { display: flex; gap: 22px; margin-top: 10px; color: var(--sub); font-variant-numeric: tabular-nums; }
.card { background: #fff; border: 1px solid var(--line); border-radius: 9px; }
.filters {
  display: flex;
  align-items: center;
  gap: 14px;
  margin-top: 22px;
  padding: 14px 22px;
  border: 1px solid var(--line);
  border-radius: 9px;
  background: #fff;
}
.segment { display: flex; gap: 1px; padding: 2px; border-radius: 6px; background: #e9eded; color: var(--text); font-weight: 500; }
.segment button { height: 53px; padding: 0 18px; border: 1px solid transparent; border-radius: 6px; }
.segment .on { background: #fff; border-color: #bcc5c2; color: var(--ink); font-weight: 700; }
.range { display: flex; align-items: center; gap: 11px; color: var(--text); font-variant-numeric: tabular-nums; }
.range .days { color: var(--sub); }
.rule { width: 1px; height: 35px; margin: 0 8px; background: #d3d9d7; }
.pick {
  display: flex;
  align-items: center;
  width: 256px;
  height: 57px;
  padding: 0 18px;
  border: 2px solid #7d8784;
  border-radius: 7px;
}
.pick span { padding-right: 11px; border-right: 1px solid #c5ccc9; line-height: 26px; color: var(--sub); }
.pick select { flex: 1; min-width: 0; padding: 0 0 0 11px; border: 0; background: none; appearance: none; }
.pick .icon { stroke-width: 2; color: var(--text); }
.reset { display: flex; align-items: center; gap: 7px; margin-left: auto; padding: 0 13px; color: #b1b6b4; }

/* indicator cards */
.kpis { display: grid; grid-template-columns: repeat(6, 1fr); gap: 22px; margin-top: 30px; }
.kpi { padding: 25px 29px 23px; }
.kpi header { display: flex; justify-content: space-between; height: 30px; }
.kpi h3 { font-size: 21px; line-height: 30px; font-weight: 600; color: var(--text); }
.kpi header .icon { color: #8f9693; stroke-width: 1.5; }
.value { display: flex; align-items: baseline; gap: 9px; height: 52px; margin-top: 18px; font-size: 47px; line-height: 52px; font-weight: 700; white-space: nowrap; }
.value small { font-size: 23px; font-weight: 400; color: var(--sub); }
.delta { display: flex; gap: 13px; margin-top: 15px; font-size: 22px; line-height: 30px; color: var(--sub); white-space: nowrap; }
.delta b { display: flex; align-items: center; gap: 5px; font-weight: 600; color: var(--text); font-variant-numeric: tabular-nums; }
.delta .good { color: var(--good); }
.delta .icon { width: 24px; height: 24px; stroke-width: 2.5; }
.spark { display: block; width: 100%; height: 50px; margin-top: 19px; overflow: visible; fill: none; stroke-linejoin: round; }
.foot { margin-top: 12px; font-size: 20px; line-height: 26px; color: var(--sub); white-space: nowrap; }

/* map and ranking */
.row-map { display: grid; grid-template-columns: 2fr 1fr; gap: 30px; margin-top: 30px; }
.panel { display: flex; flex-direction: column; overflow: hidden; min-width: 0; }
.panel h2 { font-size: 24px; line-height: 34px; }
.panel-head { padding: 23px 29px 22px; border-bottom: 1px solid var(--line); }
.panel-head p { margin-top: 6px; color: var(--text); }
.map { position: relative; height: 661px; background: #e0e0e0; }
.map-art { display: block; width: 100%; height: 100%; }
.land path { fill: #f3f3f3; stroke: #d2d2d2; stroke-width: 1; vector-effect: non-scaling-stroke; }
.inlet { fill: #e0e0e0; }
.river path { fill: none; stroke: #dcdcdc; stroke-width: 9; }
.river .thin { stroke-width: 6; }
.minor path, .major path { fill: none; stroke-linejoin: round; vector-effect: non-scaling-stroke; }
.minor path { stroke: #b9b9b9; stroke-width: 5; }
.major path { stroke: #9c9c9c; stroke-width: 8; }
.place text { font-family: "Noto Sans CJK KR", sans-serif; font-size: 30px; font-weight: 700; fill: #666; stroke: #f3f3f3; stroke-width: 1; paint-order: stroke; }
.place .faint { fill: #8c8c8c; }
.place .metro { font-size: 38px; }
.place .province { font-size: 48px; fill: #c3c3b8; }
.area rect { fill-opacity: .1; stroke-width: 2; stroke-dasharray: 9 6; }
.casing path, .route path { fill: none; stroke-linejoin: round; stroke-width: 6; }
.casing path { stroke: #fff; stroke-width: 10; }
.stops { fill: #fff; fill-opacity: .85; stroke-width: 4; }
.layer-btn, .zoomer, .legend { position: absolute; background: #fff; border-radius: 6px; box-shadow: 0 1px 3px rgb(0 0 0 / 20%); }
.layer-btn { left: 20px; top: 20px; display: flex; align-items: center; gap: 10px; height: 57px; padding: 0 18px; font-weight: 600; }
.layer-btn .icon { color: var(--text); }
.zoomer { right: 19px; top: 18px; width: 58px; overflow: hidden; }
.zoomer button { display: grid; place-items: center; width: 58px; height: 58px; }
.zoomer button + button { border-top: 1px solid var(--line); }
.zoomer .icon { width: 28px; height: 28px; }
.legend { left: 20px; bottom: 44px; width: 292px; padding: 9px 16px 11px 18px; white-space: nowrap; }
.legend li { display: flex; align-items: center; gap: 13px; height: 39px; }
.legend .first-mark { height: 48px; margin-top: 8px; padding-top: 8px; border-top: 1px solid #d3d9d7; }
.legend i { flex: none; }
.line { width: 29px; height: 5px; border-radius: 2px; }
.ring { width: 22px; height: 22px; border: 4px solid #5f6663; border-radius: 50%; }
.square { width: 22px; height: 22px; border-radius: 2px; background: #1a211f; }
.credit { position: absolute; right: 0; bottom: 0; padding: 0 12px 0 10px; border-radius: 6px 0 0; background: rgb(255 255 255 / 75%); font-size: 18px; line-height: 35px; color: var(--text); }

.rank { display: grid; flex: 1; grid-auto-rows: 1fr; padding: 16px 29px 21px 43px; }
.rank li { display: grid; grid-template-columns: 19px 1fr; gap: 20px; align-items: center; color: var(--sub); }
.no { text-align: right; }
.top .no { color: var(--ink); font-weight: 700; }
.rank p { display: flex; align-items: center; white-space: nowrap; }
.rank p i { width: 14px; height: 14px; margin-right: 10px; border-radius: 50%; }
.rank b { font-size: 24px; font-weight: 500; color: var(--ink); }
.rank em { margin-left: 10px; font-style: normal; color: var(--muted); }
.rank strong { margin-left: auto; font-size: 24px; font-weight: 600; color: var(--ink); font-variant-numeric: tabular-nums; }
.rank small { margin-left: 5px; font-size: 20px; }
.bar { height: 10px; margin-top: 10px; border-radius: 5px; background: #e9eded; }
.bar span { display: block; height: 100%; border-radius: 5px; background: var(--green); }

.row-trend { display: grid; grid-template-columns: 3fr 2fr; gap: 30px; margin-top: 30px; }
.trend { flex-direction: row; justify-content: space-between; align-items: flex-start; min-height: 480px; padding: 24px 29px; }
.trend .segment { margin-top: 8px; }
```
FILE: sparks.js
```js
// Draws each indicator's 30-day line from its data-points list.
document.querySelectorAll('.spark').forEach((svg, n) => {
  const ys = svg.dataset.points.split(' ').map(Number);
  const pts = ys.map((y, i) => `${i * 10} ${y}`);
  const line = 'M' + pts.join('L');
  const last = `M${pts[pts.length - 1]}h0`;
  const keep = 'vector-effect="non-scaling-stroke"';
  svg.innerHTML = `
    <linearGradient id="fade${n}" x1="0" y1="0" x2="0" y2="1">
      <stop offset="0" stop-color="#1e6b55" stop-opacity=".18"/>
      <stop offset="1" stop-color="#1e6b55" stop-opacity=".03"/>
    </linearGradient>
    <path d="${line}V150H0Z" fill="url(#fade${n})"/>
    <path d="${line}" stroke="#1e6b55" stroke-width="3" ${keep}/>
    <path d="${last}" stroke="#fff" stroke-width="17" stroke-linecap="round" ${keep}/>
    <path d="${last}" stroke="#1e6b55" stroke-width="10" stroke-linecap="round" ${keep}/>`;
});
```
